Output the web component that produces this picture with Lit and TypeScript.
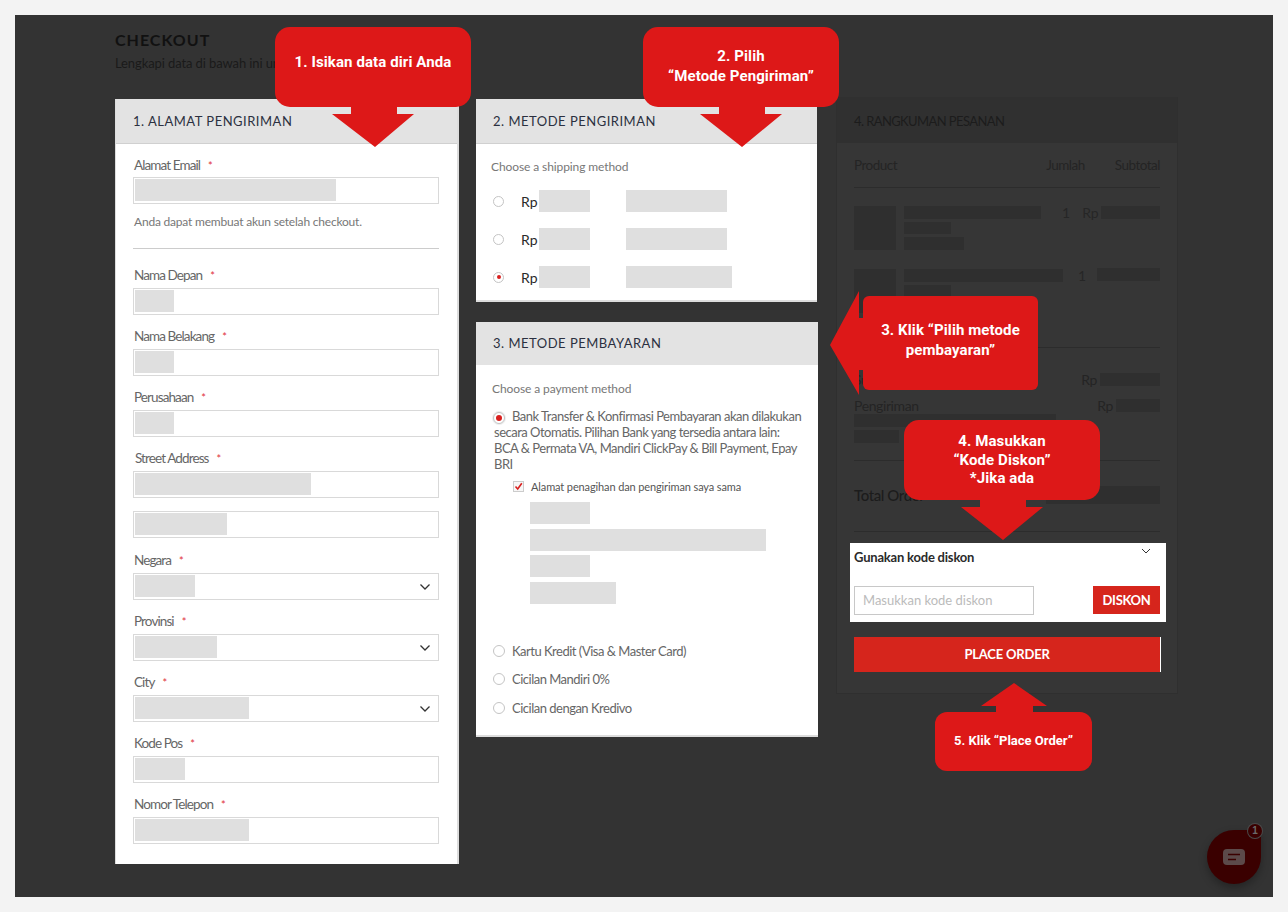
import { LitElement, html, css, nothing } from 'lit';
import { customElement } from 'lit/decorators.js';

interface Field {
  label?: string;
  fill: number;
  select?: boolean;
  street?: boolean;
}

const fields: Field[] = [
  { label: 'Nama Depan', fill: 39 },
  { label: 'Nama Belakang', fill: 39 },
  { label: 'Perusahaan', fill: 39 },
  { label: 'Street Address', fill: 176, street: true },
  { fill: 92 },
  { label: 'Negara', fill: 60, select: true },
  { label: 'Provinsi', fill: 82, select: true },
  { label: 'City', fill: 114, select: true },
  { label: 'Kode Pos', fill: 50 },
  { label: 'Nomor Telepon', fill: 114 },
];

const shipping = [101, 101, 106];

@customElement('app-root')
export class AppRoot extends LitElement {
  static styles = css`
    :host {
      display: block;
      font-family: Lato, 'Liberation Sans', sans-serif;
    }
    * {
      box-sizing: border-box;
    }
    .page {
      position: relative;
      width: 1288px;
      height: 912px;
      padding: 15px;
      background: #f3f3f3;
      overflow: hidden;
    }
    .stage {
      position: relative;
      height: 882px;
      padding: 16px 0 0 100px;
      background: #333;
    }
    h1 {
      margin: 0;
      height: 18px;
      font-size: 16px;
      line-height: 18px;
      font-weight: 700;
      letter-spacing: 1px;
      color: #111;
    }
    .sub {
      margin: 6px 0 0;
      height: 16px;
      font-size: 13px;
      line-height: 16px;
      letter-spacing: -0.1px;
      color: #1a1a1a;
    }
    .columns {
      display: flex;
      align-items: flex-start;
      margin-top: 28px;
    }
    .card {
      background: #fff;
      border-bottom: 2px solid #ddd;
    }
    .card-head {
      height: 45px;
      padding-left: 17px;
      background: #e3e3e3;
      border-bottom: 1px solid #d0d0d0;
      font-size: 13px;
      line-height: 44px;
      letter-spacing: 0.5px;
      color: #2b3040;
    }
    .col-a {
      width: 344px;
      height: 765px;
      border-left: 1px solid #ddd;
      border-right: 2px solid #ddd;
      border-bottom: 0;
    }
    .form {
      padding: 11px 18px 0 17px;
    }
    .field-label {
      height: 20px;
      padding-left: 1px;
      font-size: 13.5px;
      line-height: 20px;
      letter-spacing: -0.9px;
      color: #666;
    }
    .street {
      padding-left: 2px;
    }
    .req {
      margin-left: 8px;
      font-size: 11px;
      letter-spacing: 0;
      color: #e0303a;
    }
    .input {
      position: relative;
      display: flex;
      height: 27px;
      margin: 3px 0 11px;
      padding: 1px;
      border: 1px solid #d9d9d9;
      background: #fff;
    }
    .input.first {
      margin-top: 2px;
    }
    .input.second {
      margin: 13px 0 12px;
    }
    .fill {
      height: 22px;
      background: #dfdfdf;
    }
    .chevron {
      position: absolute;
      right: 7px;
      top: 9px;
    }
    .note {
      height: 16px;
      margin: -1px 0 0 1px;
      font-size: 12px;
      line-height: 16px;
      letter-spacing: -0.2px;
      color: #777;
    }
    .rule {
      height: 1px;
      margin: 18px 0 16px;
      background: #ccc;
    }
    .mid {
      display: flex;
      flex-direction: column;
      gap: 20px;
      width: 342px;
      margin-left: 17px;
    }
    .mid .ship {
      width: 341px;
      height: 203px;
    }
    .caption {
      font-size: 12px;
      line-height: 16px;
      letter-spacing: -0.1px;
      color: #777;
    }
    .ship-body {
      padding: 15px 0 0 15px;
    }
    .ship-list {
      display: flex;
      flex-direction: column;
      gap: 16px;
      margin-top: 15px;
    }
    .ship-row {
      display: flex;
      align-items: center;
      height: 22px;
      font-size: 14px;
      color: #2a2a2a;
    }
    .radio {
      flex: none;
      display: flex;
      align-items: center;
      justify-content: center;
      width: 12px;
      height: 12px;
      border: 1px solid #c4c4c4;
      border-radius: 50%;
      background: #fff;
    }
    .radio.on {
      box-shadow: 0 0 0 1px #eee;
    }
    .radio.on::after {
      content: '';
      width: 6px;
      height: 6px;
      border-radius: 50%;
      background: #d9201f;
    }
    .ship-row .radio {
      width: 11px;
      height: 11px;
      margin: 0 1px 0 2px;
      box-shadow: none;
    }
    .ship-row .radio.on::after {
      width: 4px;
      height: 4px;
    }
    .rp {
      width: 18px;
      margin-left: 16px;
    }
    .ship-price {
      width: 51px;
      height: 22px;
      background: #dfdfdf;
    }
    .ship-name {
      height: 22px;
      margin-left: 36px;
      background: #dfdfdf;
    }
    .pay {
      width: 342px;
      height: 415px;
    }
    .pay .card-head {
      height: 43px;
      border-bottom: 0;
      line-height: 42px;
    }
    .pay-body {
      padding: 16px 16px 0 16px;
    }
    .bank {
      margin: 11px 0 0 2px;
      font-size: 13px;
      line-height: 16px;
      letter-spacing: -0.5px;
      color: #666;
    }
    .bank .radio {
      display: inline-flex;
      vertical-align: 0;
      margin: 0 7px 0 -1px;
    }
    .same {
      display: flex;
      align-items: center;
      gap: 7px;
      margin: 6px 0 0 21px;
      height: 16px;
      font-size: 11px;
      letter-spacing: -0.12px;
      color: #555;
    }
    .check {
      display: flex;
      width: 11px;
      height: 11px;
      border: 1px solid #ccc;
      background: #f7f7f7;
    }
    .address {
      display: flex;
      flex-direction: column;
      gap: 4.5px;
      margin: 8px 0 0 38px;
    }
    .address div {
      height: 22px;
      background: #dfdfdf;
    }
    .pay-list {
      display: flex;
      flex-direction: column;
      gap: 10.5px;
      margin: 38px 0 0 0;
    }
    .pay-row {
      display: flex;
      align-items: center;
      gap: 7px;
      height: 18px;
      font-size: 13px;
      letter-spacing: -0.5px;
      color: #666;
    }
    .pay-row .radio {
      margin-left: 1px;
    }
    .summary {
      width: 342px;
      height: 597px;
      margin: -2px 0 0 18px;
      background: #363636;
      border: 1px solid #2f2f2f;
      border-top: 0;
      color: #222;
    }
    .sum-head {
      height: 46px;
      padding-left: 17px;
      background: #303030;
      font-size: 13px;
      line-height: 48px;
      letter-spacing: -0.6px;
      color: #1c1c1c;
    }
    .sum-body {
      padding: 12px 17px 0;
    }
    .sum-cols {
      display: flex;
      height: 20px;
      font-size: 13.5px;
      line-height: 20px;
      letter-spacing: -0.5px;
      color: #242424;
    }
    .grow {
      flex: 1;
    }
    .dim-rule {
      height: 1px;
      background: #2c2c2c;
    }
    .bar {
      background: #2f2f2f;
    }
    .item {
      display: flex;
      height: 44px;
      font-size: 14px;
      line-height: 14px;
      color: #262626;
    }
    .thumb {
      flex: none;
      width: 42px;
      height: 44px;
      margin-right: 8px;
      background: #2f2f2f;
    }
    .lines {
      display: flex;
      flex-direction: column;
      gap: 3px;
    }
    .lines .bar {
      height: 13px;
    }
    .total-row {
      display: flex;
      align-items: center;
      justify-content: space-between;
      font-size: 14px;
      letter-spacing: -0.4px;
      color: #242424;
    }
    .total-row.grand {
      font-size: 15px;
      font-weight: 500;
      color: #1c1c1c;
    }
    .amount {
      display: flex;
      align-items: center;
    }
    .coupon {
      height: 79px;
      margin: 11px -6px 0 -4px;
      padding: 5px 6px 0 4px;
      background: #fff;
    }
    .coupon-top {
      position: relative;
      height: 18px;
      font-size: 13px;
      line-height: 18px;
      font-weight: 700;
      letter-spacing: -0.2px;
      color: #2a2a2a;
    }
    .coupon-top svg {
      position: absolute;
      top: 0;
      right: 9px;
    }
    .coupon-row {
      display: flex;
      justify-content: space-between;
      margin-top: 20px;
    }
    .coupon-input {
      width: 180px;
      height: 29px;
      padding-left: 8px;
      border: 1px solid #c8c8c8;
      font-size: 13px;
      line-height: 27px;
      color: #bbb;
    }
    .coupon-btn {
      width: 67px;
      height: 28px;
      background: #d6251c;
      color: #fff;
      font-size: 13px;
      font-weight: 700;
      line-height: 28px;
      text-align: center;
      letter-spacing: -0.3px;
    }
    .place {
      width: 307px;
      height: 35px;
      margin-top: 15px;
      background: #d6251c;
      border-right: 1px solid #fff;
      color: #fff;
      font-size: 13px;
      font-weight: 700;
      line-height: 35px;
      text-align: center;
      letter-spacing: -0.2px;
    }
    .arrows {
      position: absolute;
      left: 0;
      top: 0;
    }
    .callout {
      position: absolute;
      display: flex;
      justify-content: center;
      background: #dd1818;
      color: #fff;
      font-family: Roboto, 'Liberation Sans', sans-serif;
      font-weight: 700;
      font-size: 15px;
      line-height: 19.5px;
      letter-spacing: 0.1px;
      text-align: center;
    }
    .c1,
    .c2,
    .c4 {
      width: 196px;
      height: 80px;
      top: 27px;
      border-radius: 15px;
    }
    .c1 {
      left: 275px;
      padding-top: 26px;
    }
    .c2 {
      left: 643px;
      padding-top: 20px;
    }
    .c3 {
      left: 863px;
      top: 296px;
      width: 175px;
      height: 94px;
      padding-top: 25px;
      border-radius: 6px;
    }
    .c4 {
      left: 904px;
      top: 420px;
      padding-top: 12px;
      line-height: 18.5px;
    }
    .c5 {
      left: 935px;
      top: 712px;
      width: 157px;
      height: 59px;
      padding-top: 19px;
      border-radius: 12px;
      font-size: 13px;
      letter-spacing: 0;
    }
    .chat {
      position: absolute;
      left: 1207px;
      top: 830px;
      width: 54px;
      height: 54px;
      display: flex;
      align-items: center;
      justify-content: center;
      border-radius: 27px 0 27px 27px;
      background: #3a0000;
      box-shadow: 0 4px 8px rgba(0, 0, 0, 0.3);
    }
    .badge {
      position: absolute;
      right: -1px;
      top: -6px;
      width: 14px;
      height: 14px;
      border-radius: 50%;
      background: #3a0000;
      box-shadow: 0 0 0 1px #4a4a4a;
      color: #6a6a6a;
      font-family: 'Liberation Sans', sans-serif;
      font-size: 10px;
      font-weight: 700;
      line-height: 14px;
      text-align: center;
    }
  `;

  private chevron() {
    return html`<svg class="chevron" width="12" height="8" viewBox="0 0 12 8">
      <path d="M1.5 1.5 6 6l4.5-4.5" fill="none" stroke="#333" stroke-width="1.3" />
    </svg>`;
  }

  private renderField(f: Field) {
    return html`
      ${f.label
        ? html`<div class="field-label ${f.street ? 'street' : ''}">
            ${f.label}<span class="req">*</span>
          </div>`
        : nothing}
      <div class="input ${f.label ? '' : 'second'}">
        <div class="fill" style="width:${f.fill}px"></div>
        ${f.select ? this.chevron() : nothing}
      </div>
    `;
  }

  private addressCard() {
    return html`
      <section class="card col-a">
        <div class="card-head">1. ALAMAT PENGIRIMAN</div>
        <div class="form">
          <div class="field-label">Alamat Email<span class="req">*</span></div>
          <div class="input first"><div class="fill" style="width:201px"></div></div>
          <div class="note">Anda dapat membuat akun setelah checkout.</div>
          <div class="rule"></div>
          ${fields.map((f) => this.renderField(f))}
        </div>
      </section>
    `;
  }

  private shippingCard() {
    return html`
      <section class="card ship">
        <div class="card-head">2. METODE PENGIRIMAN</div>
        <div class="ship-body">
          <div class="caption">Choose a shipping method</div>
          <div class="ship-list">
            ${shipping.map(
              (w, i) => html`<div class="ship-row">
                <span class="radio ${i === 2 ? 'on' : ''}"></span>
                <span class="rp">Rp</span>
                <span class="ship-price"></span>
                <span class="ship-name" style="width:${w}px"></span>
              </div>`
            )}
          </div>
        </div>
      </section>
    `;
  }

  private paymentCard() {
    return html`
      <section class="card pay">
        <div class="card-head">3. METODE PEMBAYARAN</div>
        <div class="pay-body">
          <div class="caption">Choose a payment method</div>
          <div class="bank">
            <span class="radio on"></span>Bank Transfer &amp; Konfirmasi Pembayaran akan dilakukan<br />
            secara Otomatis. Pilihan Bank yang tersedia antara lain:<br />
            BCA &amp; Permata VA, Mandiri ClickPay &amp; Bill Payment, Epay<br />
            BRI
          </div>
          <div class="same">
            <span class="check">
              <svg width="9" height="9" viewBox="0 0 9 9">
                <path d="M1.5 4.5 3.7 7 7.8 1.2" fill="none" stroke="#d9201f" stroke-width="1.6" />
              </svg>
            </span>
            Alamat penagihan dan pengiriman saya sama
          </div>
          <div class="address">
            <div style="width:60px"></div>
            <div style="width:236px"></div>
            <div style="width:60px"></div>
            <div style="width:86px"></div>
          </div>
          <div class="pay-list">
            <div class="pay-row"><span class="radio"></span>Kartu Kredit (Visa &amp; Master Card)</div>
            <div class="pay-row"><span class="radio"></span>Cicilan Mandiri 0%</div>
            <div class="pay-row"><span class="radio"></span>Cicilan dengan Kredivo</div>
          </div>
        </div>
      </section>
    `;
  }

  private summaryCard() {
    return html`
      <section class="summary">
        <div class="sum-head">4. RANGKUMAN PESANAN</div>
        <div class="sum-body">
          <div class="sum-cols">
            <span class="grow">Product</span>
            <span>Jumlah</span>
            <span style="margin-left:30px">Subtotal</span>
          </div>
          <div class="dim-rule" style="margin:12px 0 18px"></div>
          <div class="item">
            <div class="thumb"></div>
            <div class="lines">
              <div class="bar" style="width:137px"></div>
              <div class="bar" style="width:47px"></div>
              <div class="bar" style="width:60px"></div>
            </div>
            <span style="margin-left:21px">1</span>
            <span style="margin-left:12px">Rp</span>
            <div class="bar" style="width:59px;height:13px;margin-left:2px"></div>
          </div>
          <div class="item" style="margin-top:19px">
            <div class="thumb"></div>
            <div class="lines">
              <div class="bar" style="width:159px"></div>
              <div class="bar" style="width:47px"></div>
              <div class="bar" style="width:60px"></div>
            </div>
            <span style="margin-left:15px">1</span>
            <div class="bar" style="width:63px;height:13px;margin:-1px 0 0 11px"></div>
          </div>
          <div class="dim-rule" style="margin-top:34px"></div>
          <div class="total-row" style="margin-top:24px;height:15px">
            <span>Subtotal</span>
            <span class="amount">Rp<span class="bar" style="width:60px;height:13px;margin-left:3px"></span></span>
          </div>
          <div class="total-row" style="margin-top:12px;height:13px">
            <span>Pengiriman</span>
            <span class="amount">Rp<span class="bar" style="width:44px;height:13px;margin-left:3px"></span></span>
          </div>
          <div class="bar" style="width:202px;height:13px;margin-top:2px"></div>
          <div class="bar" style="width:45px;height:13px;margin-top:3px"></div>
          <div class="dim-rule" style="margin-top:17px"></div>
          <div class="total-row grand" style="margin-top:25px;height:18px">
            <span>Total Order</span>
            <span class="bar" style="width:114px;height:18px"></span>
          </div>
          <div class="dim-rule" style="margin-top:27px"></div>
          <div class="coupon">
            <div class="coupon-top">
              Gunakan kode diskon
              <svg width="10" height="6" viewBox="0 0 10 6">
                <path d="M1 1l4 4 4-4" fill="none" stroke="#333" stroke-width="1" />
              </svg>
            </div>
            <div class="coupon-row">
              <div class="coupon-input">Masukkan kode diskon</div>
              <div class="coupon-btn">DISKON</div>
            </div>
          </div>
          <div class="place">PLACE ORDER</div>
        </div>
      </section>
    `;
  }

  render() {
    return html`
      <div class="page">
        <div class="stage">
          <h1>CHECKOUT</h1>
          <p class="sub">Lengkapi data di bawah ini untuk melanjutkan pesanan</p>
          <div class="columns">
            ${this.addressCard()}
            <div class="mid">${this.shippingCard()} ${this.paymentCard()}</div>
            ${this.summaryCard()}
          </div>
        </div>

        <svg class="arrows" width="1288" height="912" fill="#dd1818">
          <path d="M351 100h46v14h17l-39 33-43-33h19z" />
          <path d="M719 100h46v14h17l-40 33-42-33h19z" />
          <path d="M830 345 859 291V318h7v52h-7v25z" />
          <path d="M980 495h46v12h17l-40 33-42-33h19z" />
          <path d="M996 716h37v-10h14l-33-23-33 23h15z" />
        </svg>
        <div class="callout c1">1. Isikan data diri Anda</div>
        <div class="callout c2">2. Pilih<br />“Metode Pengiriman”</div>
        <div class="callout c3">3. Klik “Pilih metode<br />pembayaran”</div>
        <div class="callout c4">4. Masukkan<br />“Kode Diskon”<br />*Jika ada</div>
        <div class="callout c5">5. Klik “Place Order”</div>

        <div class="chat">
          <svg width="22" height="16" viewBox="0 0 22 16">
            <rect width="22" height="16" rx="4" fill="#5c4a4a" />
            <path d="M5 5.5h12M5 10.5h8" stroke="#3a0000" stroke-width="1.4" />
          </svg>
          <span class="badge">1</span>
        </div>
      </div>
    `;
  }
}
